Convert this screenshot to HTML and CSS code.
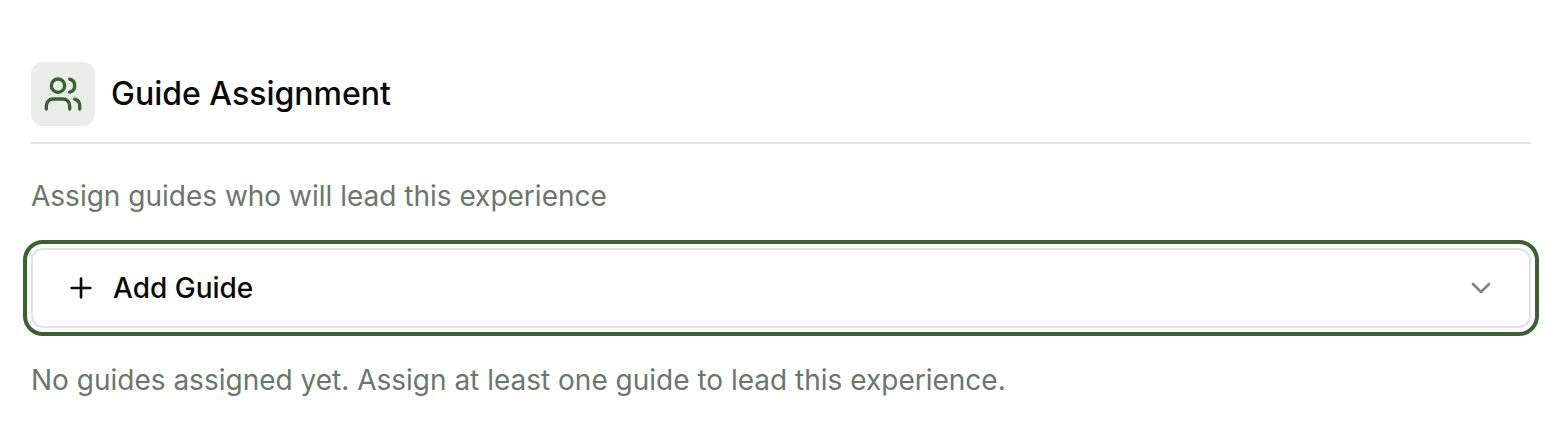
FILE: index.html
```
<!DOCTYPE html>
<html lang="en">
<head>
<meta charset="utf-8">
<title>Guide Assignment</title>
<link rel="stylesheet" href="styles.css">
</head>
<body>
<section class="panel">
  <header class="panel-header">
    <span class="badge">
      <svg class="icon-users" viewBox="0 0 24 24" aria-hidden="true"><path d="M16 21v-2a4 4 0 0 0-4-4H6a4 4 0 0 0-4 4v2"/><circle cx="9" cy="7" r="4"/><path d="M22 21v-2a4 4 0 0 0-3-3.870"/><path d="M16 3.130a4 4 0 0 1 0 7.750"/></svg>
    </span>
    <h2 class="title">Guide Assignment</h2>
  </header>
  <p class="text">Assign guides who will lead this experience</p>
  <button class="add" type="button">
    <svg class="icon-plus" viewBox="0 0 24 24" aria-hidden="true"><path d="M5 12h14M12 5v14"/></svg>
    <span class="label">Add Guide</span>
    <svg class="icon-chevron" viewBox="0 0 24 24" aria-hidden="true"><path d="m6 9 6 6 6-6"/></svg>
  </button>
  <p class="text">No guides assigned yet. Assign at least one guide to lead this experience.</p>
</section>
</body>
</html>
```
FILE: styles.css
```
* { box-sizing: border-box; }
body { margin: 0; background: #fff; color: #0a0a0a; font-family: Inter, sans-serif; }
svg { fill: none; stroke: currentColor; stroke-width: 2; stroke-linecap: round; stroke-linejoin: round; flex: none; }
.panel { display: flex; flex-direction: column; gap: 32px; padding: 62px 25px 32px 31px; }
.panel-header { display: flex; align-items: center; gap: 16px; padding-bottom: 16px; border-bottom: 2px solid #e3e3e3; }
.badge { display: flex; align-items: center; justify-content: center; width: 64px; height: 64px; border-radius: 12px; background: #e9eee9; color: #3a6132; }
.icon-users { width: 40px; height: 40px; }
.title { margin: 0; font-size: 32px; line-height: 48px; font-weight: 500; }
.text { margin: 0; font-size: 28px; line-height: 40px; color: #6b766c; }
.add { display: flex; align-items: center; gap: 16px; width: 100%; height: 80px; padding: 0 32px; border: 2px solid #e3e3e3; border-radius: 12px; background: #fff; color: #0a0a0a; font: 500 28px/40px Inter, sans-serif; text-align: left; outline: 4px solid #3a6132; outline-offset: 4px; }
.label { flex: 1; }
.icon-plus { width: 32px; height: 32px; }
.icon-chevron { width: 32px; height: 32px; color: #848484; }
```
